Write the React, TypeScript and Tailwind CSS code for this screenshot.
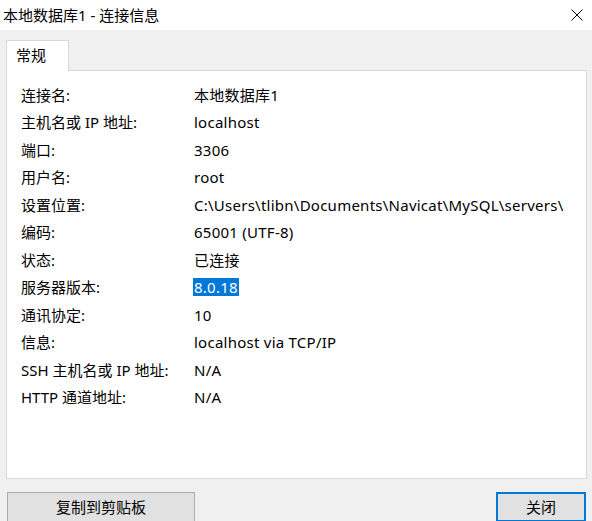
const rows: { label: string; value: string; selected?: boolean }[] = [
  { label: "连接名:", value: "本地数据库1" },
  { label: "主机名或 IP 地址:", value: "localhost" },
  { label: "端口:", value: "3306" },
  { label: "用户名:", value: "root" },
  { label: "设置位置:", value: "C:\\Users\\tlibn\\Documents\\Navicat\\MySQL\\servers\\" },
  { label: "编码:", value: "65001 (UTF-8)" },
  { label: "状态:", value: "已连接" },
  { label: "服务器版本:", value: "8.0.18", selected: true },
  { label: "通讯协定:", value: "10" },
  { label: "信息:", value: "localhost via TCP/IP" },
  { label: "SSH 主机名或 IP 地址:", value: "N/A" },
  { label: "HTTP 通道地址:", value: "N/A" },
];

const font = {
  fontFamily: '"Noto Sans", "Noto Sans CJK SC", sans-serif',
};

export default function App() {
  return (
    <div
      className="w-[592px] h-[521px] overflow-hidden bg-[#f0f0f0] text-black text-[15px]"
      style={font}
    >
      {/* title bar */}
      <div className="h-[30px] bg-white flex items-center justify-between pl-[3px] pr-[9px]">
        <span className="leading-[20px]">本地数据库1 - 连接信息</span>
        <svg width="12" height="12" viewBox="0 0 12 12" fill="none">
          <path d="M0.5 0.5 L11.5 11.5 M11.5 0.5 L0.5 11.5" stroke="#000" strokeWidth="1" />
        </svg>
      </div>

      {/* tab */}
      <div className="pt-[10px] pl-[6px]">
        <div className="relative z-10 -mb-px w-[63px] h-[31px] bg-white border border-b-0 border-[#d9d9d9] pl-[9px] pt-[4px] leading-[20px]">
          常规
        </div>
      </div>

      {/* panel */}
      <div className="ml-[6px] mr-[5px] h-[409px] bg-white border border-[#d9d9d9] pt-[10px] pl-[14px]">
        {rows.map((r) => (
          <div key={r.label} className="flex items-center h-[27.5px] leading-[18px]">
            <span className="w-[173px] shrink-0">{r.label}</span>
            {r.selected ? (
              <span className="bg-[#0078d7] text-white px-px -ml-px tracking-[0.25px]">{r.value}</span>
            ) : (
              <span className="whitespace-nowrap tracking-[0.25px]">{r.value}</span>
            )}
          </div>
        ))}
      </div>

      {/* buttons */}
      <div className="flex justify-between mt-[13px] pl-[7px] pr-[6px]">
        <button className="w-[188px] h-[30px] bg-[#e1e1e1] border border-[#adadad] leading-[20px]">
          复制到剪贴板
        </button>
        <button className="w-[90px] h-[30px] bg-[#e1e1e1] border-2 border-[#0078d7] leading-[20px]">
          关闭
        </button>
      </div>
    </div>
  );
}
